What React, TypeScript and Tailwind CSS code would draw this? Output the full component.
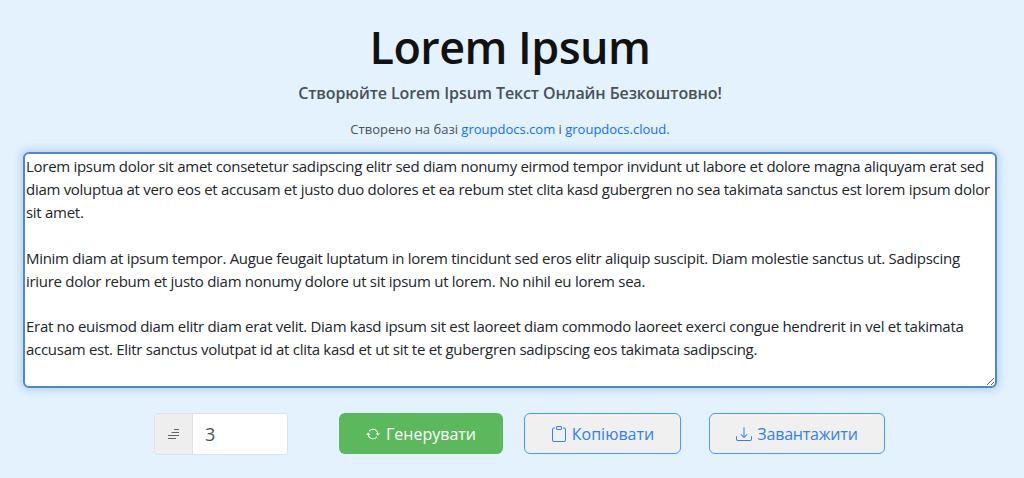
import React from "react";
import { BsArrowRepeat, BsClipboard, BsDownload } from "react-icons/bs";

const text = `Lorem ipsum dolor sit amet consetetur sadipscing elitr sed diam nonumy eirmod tempor invidunt ut labore et dolore magna aliquyam erat sed diam voluptua at vero eos et accusam et justo duo dolores et ea rebum stet clita kasd gubergren no sea takimata sanctus est lorem ipsum dolor sit amet.

Minim diam at ipsum tempor. Augue feugait luptatum in lorem tincidunt sed eros elitr aliquip suscipit. Diam molestie sanctus ut. Sadipscing iriure dolor rebum et justo diam nonumy dolore ut sit ipsum ut lorem. No nihil eu lorem sea.

Erat no euismod diam elitr diam erat velit. Diam kasd ipsum sit est laoreet diam commodo laoreet exerci congue hendrerit in vel et takimata accusam est. Elitr sanctus volutpat id at clita kasd et ut sit te et gubergren sadipscing eos takimata sadipscing.`;

export default function App() {
  return (
    <div className="h-[478px] w-[1024px] overflow-hidden bg-[#e3f2fd] font-['Open_Sans','Noto_Sans',sans-serif] text-[#212529]">
      <div className="flex w-[1020px] flex-col items-center">
        <h1 className="mt-[19px] text-[45px] leading-[56px] font-semibold text-[#111] tracking-[-0.55px]">Lorem Ipsum</h1>
        <h2 className="mt-[6px] text-[16px] leading-[24px] font-semibold text-[#495057] tracking-[-0.1px]">Створюйте Lorem Ipsum Текст Онлайн Безкоштовно!</h2>
        <p className="mt-[15px] text-[13px] leading-[18px] font-medium text-[#495057]">
          Створено на базі <a className="text-[#0d6efd]">groupdocs.com</a> і <a className="text-[#0d6efd]">groupdocs.cloud.</a>
        </p>
      </div>
      <div className="mt-[14px] px-[23px]">
        <textarea
          readOnly
          defaultValue={text}
          className="block h-[236px] w-[974px] rounded-[6px] border-2 border-[#4f8ac4] bg-white px-[1px] py-[1px] text-[15px] leading-[22.9px] tracking-[-0.285px] text-[#212529] shadow-[0_0_7px_3px_rgba(66,135,215,0.25)] outline-none"
        />
      </div>
      <div className="mt-[25px] flex items-start pl-[154px]">
        <div className="flex h-[42px] w-[134px] overflow-hidden rounded-[4px] border border-[#dee2e6]">
          <span className="flex w-[38px] items-center justify-center border-r border-[#dee2e6] bg-[#eeeeee]">
            <svg width="14" height="12" viewBox="0 0 14 12" fill="none" stroke="#5c636a" strokeWidth="1">
              <path d="M7 1.5h5M4.5 4.5h7.5M1 7.5h11M1 10.5h8" />
            </svg>
          </span>
          <span className="flex flex-1 items-center bg-white pl-[12px] text-[18px] text-[#495057]">3</span>
        </div>
        <button className="ml-[51px] flex h-[41px] w-[164px] items-center justify-center gap-[6px] rounded-[6px] bg-[#5cb85c] text-[16px] text-white">
          <BsArrowRepeat size={14} /> Генерувати
        </button>
        <button className="ml-[21px] flex h-[41px] w-[157px] items-center justify-center gap-[5px] rounded-[6px] border border-[#4b9bf5] bg-[#f0f0f0] text-[16px] text-[#2f80f0]">
          <BsClipboard size={16} /> Копіювати
        </button>
        <button className="ml-[28px] flex h-[41px] w-[176px] items-center justify-center gap-[5px] rounded-[6px] border border-[#4b9bf5] bg-[#f0f0f0] text-[16px] tracking-[-0.2px] text-[#2f80f0]">
          <BsDownload size={16} /> Завантажити
        </button>
      </div>
    </div>
  );
}
